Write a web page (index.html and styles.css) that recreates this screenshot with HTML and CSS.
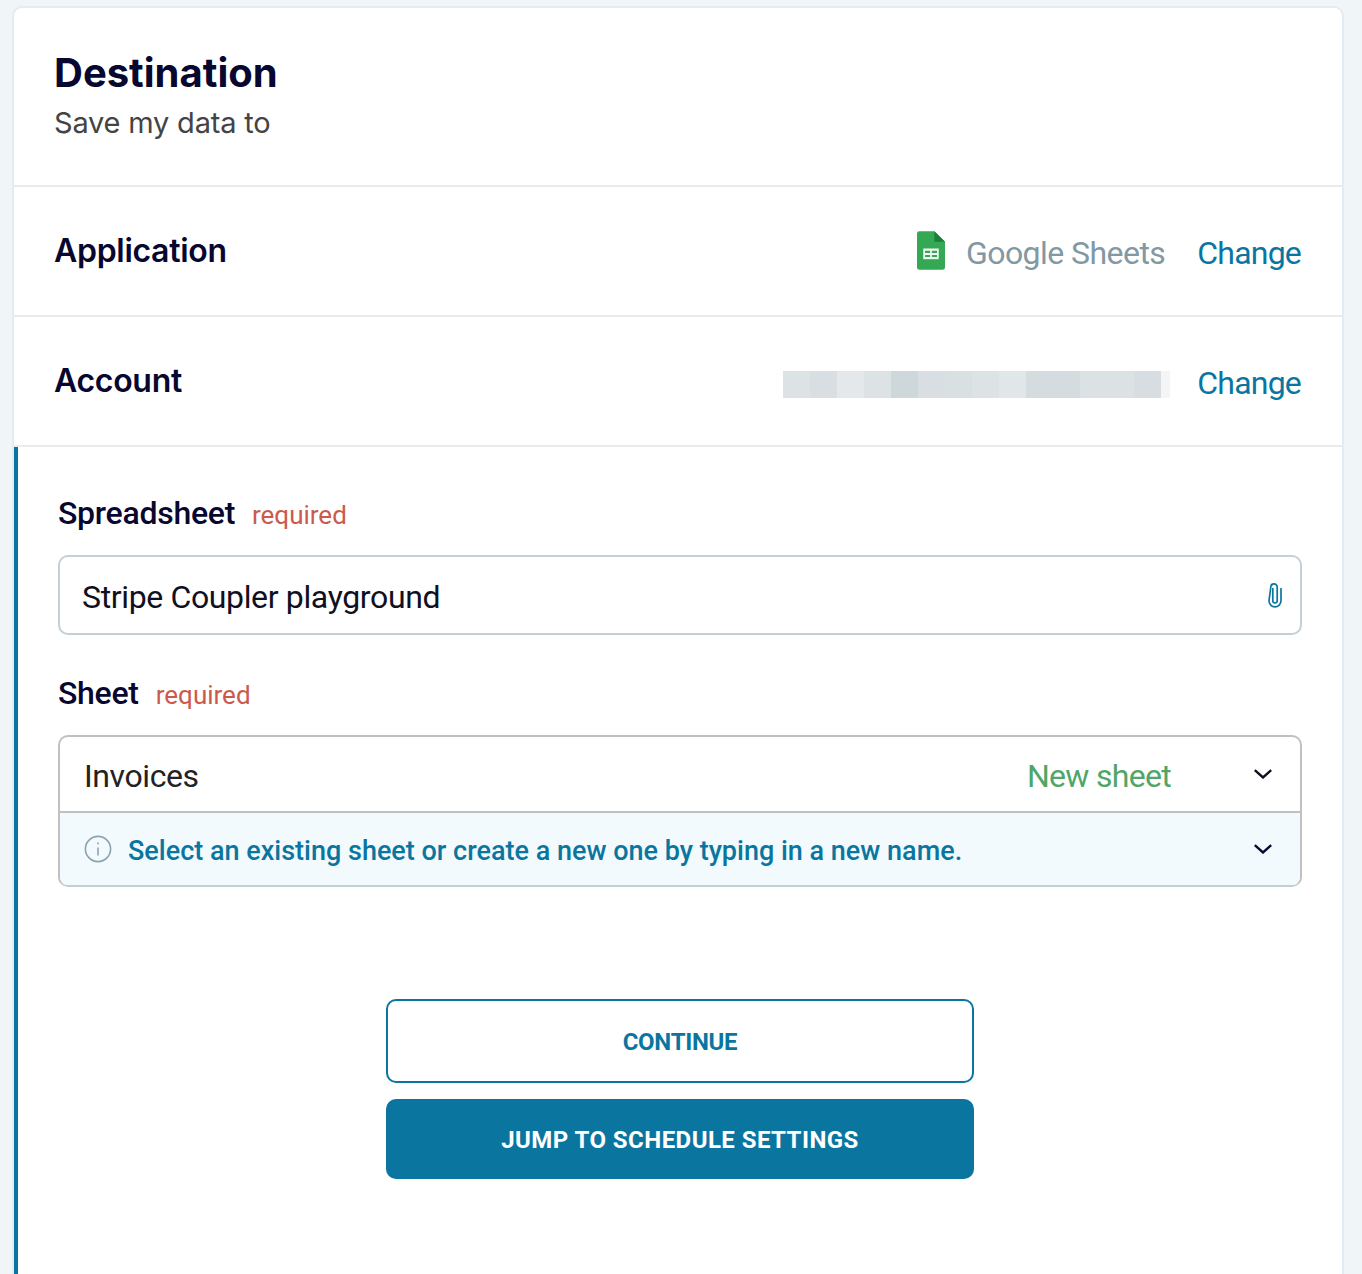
FILE: index.html
```html
<!DOCTYPE html>
<html lang="en">
<head>
<meta charset="utf-8">
<title>Destination</title>
<link rel="stylesheet" href="styles.css">
</head>
<body>
<main class="card">
  <header class="head">
    <h1 class="title">Destination</h1>
    <p class="subtitle">Save my data to</p>
  </header>
  <section class="row">
    <h2 class="row-label">Application</h2>
    <div class="row-value">
      <svg class="sheets-icon" viewBox="0 0 29 40" width="28" height="39" aria-hidden="true">
        <path d="M2.500 0H18l11 11v26.500a2.500 2.500 0 0 1-2.500 2.500h-24A2.500 2.500 0 0 1 0 37.500v-35A2.500 2.500 0 0 1 2.500 0z" fill="#34a853"/>
        <path d="M18 0l11 11H18z" fill="#188038"/>
        <path d="M6.500 18h16v11h-16z" fill="#f1f8f3"/>
        <path d="M8.300 20.300h5.300v2.200H8.300zM15.400 20.300h5.300v2.200h-5.300zM8.300 24.600h5.300v2.200H8.300zM15.400 24.600h5.300v2.200h-5.300z" fill="#34a853"/>
      </svg>
      <span class="app-name">Google Sheets</span>
      <a class="change" href="#">Change</a>
    </div>
  </section>
  <section class="row">
    <h2 class="row-label">Account</h2>
    <div class="row-value">
      <div class="blur" aria-hidden="true">
        <i class="b1"></i><i class="b2"></i><i class="b3"></i><i class="b4"></i><i class="b5"></i><i class="b6"></i><i class="b7"></i><i class="b8"></i><i class="b9"></i><i class="b10"></i><i class="b11"></i><i class="b12"></i><i class="b13"></i><i class="b14"></i><i class="b15"></i>
      </div>
      <a class="change" href="#">Change</a>
    </div>
  </section>
  <section class="form">
    <div class="field-label"><span class="label">Spreadsheet</span><span class="req">required</span></div>
    <div class="input">
      <span class="input-text">Stripe Coupler playground</span>
      <svg class="clip" viewBox="0 0 16 28" width="16" height="28" aria-hidden="true" fill="none" stroke="#0a76a0" stroke-width="1.700" stroke-linecap="round">
        <path d="M5.800 7.500v12.300a2.200 2.200 0 0 0 4.400 0V6.200a3.200 3.200 0 0 0-6.400-.2L2 19.800a6 6 0 0 0 12 0V7.500"/>
      </svg>
    </div>
    <div class="field-label second"><span class="label">Sheet</span><span class="req">required</span></div>
    <div class="select">
      <div class="select-main">
        <span class="select-text">Invoices</span>
        <span class="new">New sheet</span>
        <svg class="chev" viewBox="0 0 18 10" width="18" height="10" aria-hidden="true"><path d="M.8 1.200L9 8.500l8.200-7.300" fill="none" stroke="#0f0f1e" stroke-width="2.400"/></svg>
      </div>
      <div class="select-hint">
        <svg class="info" viewBox="0 0 28 28" width="28" height="28" aria-hidden="true" fill="none" stroke="#8aa3af" stroke-width="1.600"><circle cx="14" cy="14" r="12.600"/><path d="M14 12.500v8M14 7.500v1.800"/></svg>
        <span class="hint-text">Select an existing sheet or create a new one by typing in a new name.</span>
        <svg class="chev" viewBox="0 0 18 10" width="18" height="10" aria-hidden="true"><path d="M.8 1.200L9 8.500l8.200-7.300" fill="none" stroke="#0a0a33" stroke-width="2.400"/></svg>
      </div>
    </div>
    <div class="actions">
      <button class="btn outline" type="button">CONTINUE</button>
      <button class="btn solid" type="button">JUMP TO SCHEDULE SETTINGS</button>
    </div>
  </section>
</main>
</body>
</html>
```
FILE: styles.css
```css
* { box-sizing: border-box; }
html, body { height: 100%; }
body {
  margin: 0;
  height: 1274px;
  overflow: hidden;
  background: #f0f5f8;
  padding: 6px 18px 0 12px;
  font-family: Roboto, "Liberation Sans", sans-serif;
}
.card {
  height: 1300px;
  background: #fff;
  border: 2px solid #e3ecf2;
  border-radius: 10px 10px 0 0;
  overflow: hidden;
}
.head {
  height: 179px;
  padding: 41px 40px 0;
  border-bottom: 2px solid #e8ecef;
}
.title {
  margin: 0;
  font: 700 40px/47px Inter, sans-serif;
  color: #07072f;
}
.subtitle {
  margin: 8px 0 0;
  font: 400 29px/37px Inter, sans-serif;
  letter-spacing: -0.2px;
  color: #444;
}
.row {
  height: 130px;
  padding: 0 41px 0 40px;
  display: flex;
  align-items: center;
  justify-content: space-between;
  border-bottom: 2px solid #e8ecef;
}
.row-label {
  margin: -1px 0 0;
  font: 600 32px/40px Inter, sans-serif;
  letter-spacing: -0.3px;
  color: #07072f;
}
.row-value { display: flex; align-items: center; }
.sheets-icon { margin-right: 21px; margin-top: -1px; }
.app-name { font-size: 32px; line-height: 40px; padding-top: 4px; letter-spacing: -0.55px; color: #8298a3; margin-right: 32px; }
.change { font-size: 32px; line-height: 40px; padding-top: 4px; letter-spacing: -0.8px; color: #0a76a0; text-decoration: none; }
.blur { display: flex; height: 27px; margin: 6px 27px 0 0; }
.blur i { display: block; width: 27px; }
.b1 { background: #dde2e5; }
.b2 { background: #d8dee1; }
.b3 { background: #e4e8ea; }
.b4 { background: #dde2e5; }
.b5 { background: #ced7da; }
.b6 { background: #d8dee1; }
.b7 { background: #d9e0e2; }
.b8 { background: #dde2e5; }
.b9 { background: #e1e6e8; }
.b10 { background: #d5dcdf; }
.b11 { background: #d5dcdf; }
.b12 { background: #dce1e4; }
.b13 { background: #dce1e4; }
.b14 { background: #d7dde1; }
.blur .b15 { background: #f5f5f5; width: 9px; }
.form {
  height: 860px;
  border-left: 4px solid #0a76a0;
  padding: 45px 40px 0 40px;
}
.field-label { display: flex; align-items: baseline; height: 42px; }
.field-label.second { margin-top: 37px; }
.label { font-size: 32px; line-height: 42px; font-weight: 500; letter-spacing: -0.27px; color: #07072f; }
.req { font-size: 26px; color: #cc5a4c; margin-left: 17px; }
.input {
  margin-top: 21px;
  height: 80px;
  border: 2px solid #c4d0d6;
  border-radius: 10px;
  display: flex;
  align-items: center;
  justify-content: space-between;
  padding: 0 17px 0 22px;
}
.input-text { font-size: 32px; padding-top: 4px; letter-spacing: -0.36px; color: #101020; }
.select {
  margin-top: 21px;
  border-radius: 10px;
  overflow: hidden;
  border: 2px solid #c0c0c0;
  border-bottom-color: #c0d0d8;
}
.select-main {
  height: 76px;
  display: flex;
  align-items: center;
  padding: 0 28px 0 24px;
  border-bottom: 2px solid #c0c0c0;
}
.select-text { font-size: 32px; padding-top: 4px; letter-spacing: -0.4px; color: #222; flex: 1; }
.new { font-size: 32px; padding-top: 4px; letter-spacing: -0.7px; color: #4fa668; margin-right: 83px; }
.select-hint {
  height: 72px;
  display: flex;
  align-items: center;
  padding: 0 28px 0 24px;
  background: #f2fafd;
}
.info { margin-right: 16px; }
.hint-text { flex: 1; font-size: 27px; padding-top: 4px; font-weight: 500; color: #0a76a0; }
.actions {
  margin-top: 112px;
  display: flex;
  flex-direction: column;
  align-items: center;
  gap: 16px;
}
.btn {
  width: 588px;
  height: 84px;
  border-radius: 10px;
  font: 700 24px/28px Roboto, sans-serif;
  padding: 2px 0 0;
}
.outline { background: #fff; border: 2px solid #0a76a0; color: #0a76a0; letter-spacing: -0.3px; }
.solid { height: 80px; background: #0a76a0; border: 0; color: #fff; letter-spacing: 0.45px; }
```
